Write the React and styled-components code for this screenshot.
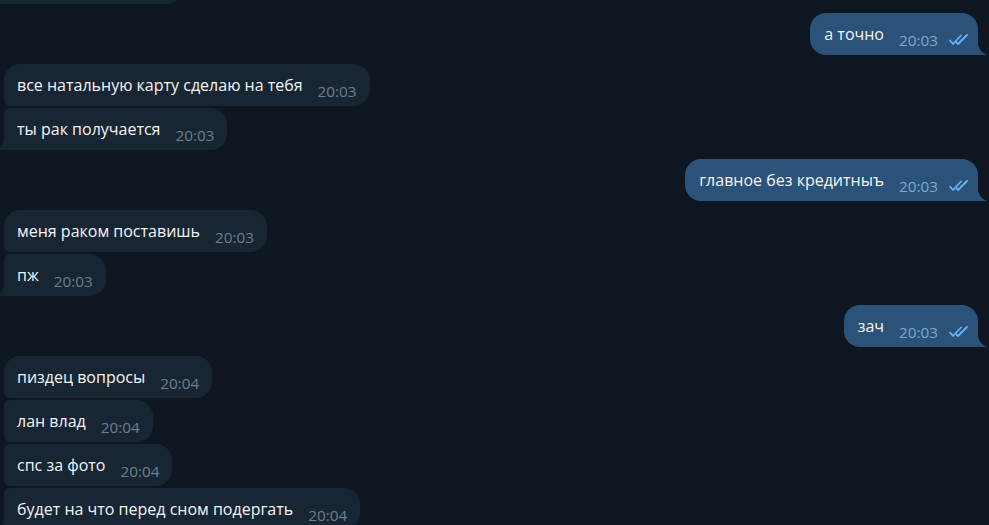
import styled, { createGlobalStyle, css } from "styled-components";

const GlobalStyle = createGlobalStyle`
  html, body {
    margin: 0;
    padding: 0;
    background: #0e1621;
  }
  body {
    font-family: "Open Sans", "Noto Sans", sans-serif;
  }
`;

const Chat = styled.div`
  width: 989px;
  height: 525px;
  overflow: hidden;
  display: flex;
  flex-direction: column;
  gap: 9px;
  background: #0e1621;
`;

const Group = styled.div`
  display: flex;
  flex-direction: column;
  align-items: ${(p) => (p.$out ? "flex-end" : "flex-start")};
  gap: 2px;
  padding: ${(p) => (p.$out ? "0 11px 0 0" : "0 0 0 4px")};
  margin-top: ${(p) => p.$offset || 0}px;
`;

const Bubble = styled.div`
  position: relative;
  display: flex;
  align-items: flex-end;
  height: 42px;
  box-sizing: border-box;
  padding: 11px 13px 5px 13px;
  border-radius: 16px;
  background: ${(p) => (p.$out ? "#2b5278" : "#182533")};
  ${(p) => p.$width && `width: ${p.$width}px;`}
  ${(p) =>
    p.$out
      ? css`
          padding-left: 14px;
          padding-right: 8px;
          border-bottom-right-radius: 0;
        `
      : css`
          border-top-left-radius: ${p.$first ? 16 : 6}px;
          border-bottom-left-radius: ${p.$last ? 0 : 6}px;
        `}
`;

const Text = styled.span`
  color: #f5f5f5;
  font-size: 16px;
  line-height: 20px;
  margin-bottom: 6px;
  white-space: nowrap;
`;

const Time = styled.span`
  color: ${(p) => (p.$out ? "#7da8d3" : "#6d7f8f")};
  font-size: 15.3px;
  line-height: 20px;
  margin-left: 15px;
  white-space: nowrap;
`;

const Check = styled.svg`
  width: 22px;
  height: 12px;
  margin: 0 0 4px 10px;
  flex-shrink: 0;
`;

const Tail = styled.svg`
  position: absolute;
  bottom: 0;
  width: 10px;
  height: 16px;
  ${(p) => (p.$out ? "right: -9px;" : "left: -9px; transform: scaleX(-1);")}
`;

function DoubleCheck() {
  return (
    <Check viewBox="0 0 22 12" fill="none" stroke="#64b5f6" strokeWidth="1.8" strokeLinecap="round" strokeLinejoin="round">
      <path d="M2 6.5 L5 10 L13 1.5" />
      <path d="M8.5 8.5 L10 10 L19 1" />
    </Check>
  );
}

function Message({ text, time, out, first, last, width }) {
  return (
    <Bubble $out={out} $first={first} $last={last} $width={width}>
      {text && <Text>{text}</Text>}
      {time && <Time $out={out}>{time}</Time>}
      {out && <DoubleCheck />}
      {last && (
        <Tail $out={out} viewBox="0 0 10 16">
          <path d="M0 0 Q1 13 10 16 L0 16 Z" fill={out ? "#2b5278" : "#182533"} />
        </Tail>
      )}
    </Bubble>
  );
}

const groups = [
  // message scrolled off the top: only its lower edge is visible
  { out: false, offset: -38, msgs: [{ width: 179 }] },
  { out: true, msgs: [{ text: "а точно", time: "20:03" }] },
  {
    out: false,
    msgs: [
      { text: "все натальную карту сделаю на тебя", time: "20:03" },
      { text: "ты рак получается", time: "20:03" },
    ],
  },
  { out: true, msgs: [{ text: "главное без кредитныъ", time: "20:03" }] },
  {
    out: false,
    msgs: [
      { text: "меня раком поставишь", time: "20:03" },
      { text: "пж", time: "20:03" },
    ],
  },
  { out: true, msgs: [{ text: "зач", time: "20:03" }] },
  {
    out: false,
    msgs: [
      { text: "пиздец вопросы", time: "20:04" },
      { text: "лан влад", time: "20:04" },
      { text: "спс за фото", time: "20:04" },
      { text: "будет на что перед сном подергать", time: "20:04" },
    ],
  },
];

export default function App() {
  return (
    <>
      <GlobalStyle />
      <Chat>
        {groups.map((g, gi) => (
          <Group key={gi} $out={g.out} $offset={g.offset}>
            {g.msgs.map((m, i) => (
              <Message
                key={i}
                {...m}
                out={g.out}
                first={i === 0}
                last={i === g.msgs.length - 1}
              />
            ))}
          </Group>
        ))}
      </Chat>
    </>
  );
}
